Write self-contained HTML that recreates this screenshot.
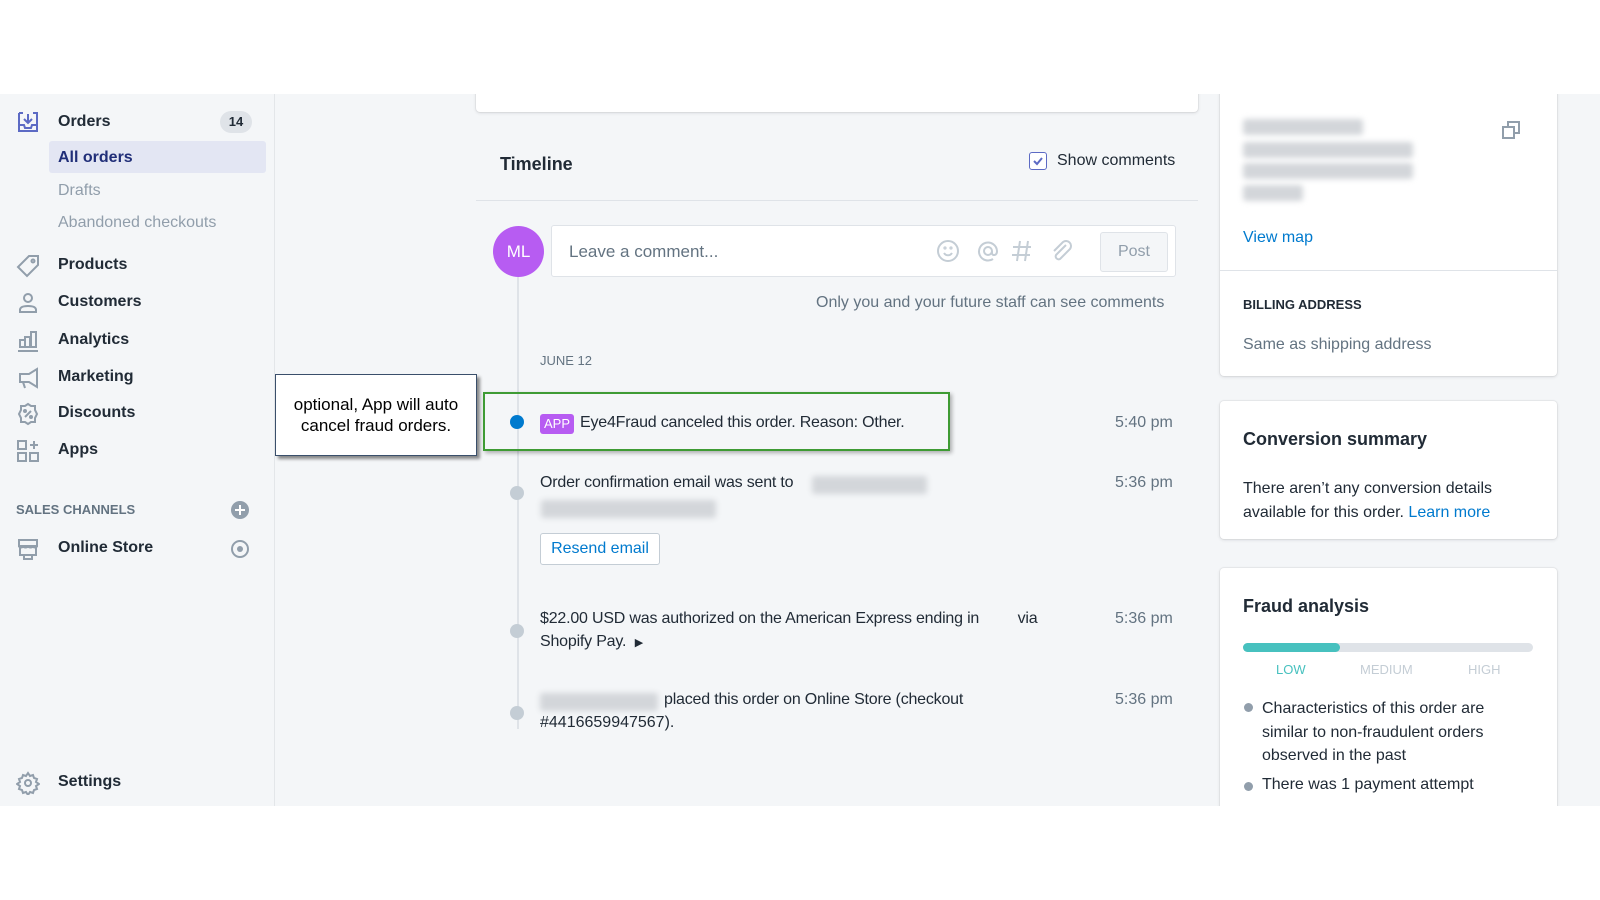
<!DOCTYPE html>
<html><head><meta charset="utf-8"><style>
*{box-sizing:border-box;margin:0;padding:0}
body{width:1600px;height:900px;background:#fff;font-family:"Liberation Sans",sans-serif;position:relative;overflow:hidden;color:#212b36}
#app{position:absolute;left:0;top:94px;width:1600px;height:712px;background:#f4f6f8;overflow:hidden}
#side{position:absolute;left:0;top:0;width:275px;height:712px;border-right:1px solid #e3e6e9;background:#f4f6f8}
.abs{position:absolute}
.nav{position:absolute;left:58px;font-size:16px;color:#212b36;font-weight:bold}
.sub{position:absolute;left:58px;font-size:16px;color:#919eab}
.ic{position:absolute;left:16px}
.card{position:absolute;background:#fff;border-radius:4px;box-shadow:0 0 0 1px rgba(63,63,68,.05),0 1px 3px rgba(63,63,68,.15)}
.t{position:absolute;font-size:16px;color:#212b36;white-space:nowrap}
.time{position:absolute;left:1115px;font-size:16px;color:#637381}
.dot{position:absolute;left:510px;width:14px;height:14px;border-radius:50%;background:#c4cdd5}
.blur{position:absolute;background:#d3d6da;filter:blur(3px);border-radius:3px}
</style></head><body>
<div id="app">
 <div id="side">
  <div class="abs" style="left:18px;top:-6px;width:20px;height:3px;background:#919eab"></div>
  <svg class="ic" style="top:16px" width="24" height="24" viewBox="0 0 24 24" fill="none" stroke="#5c6ac4" stroke-width="2"><path d="M3 3h4M17 3h4v18H3V3M3 15h5l1 3h6l1-3h5M12 4v8M8 9l4 4 4-4"/></svg>
  <div class="nav" style="top:19px">Orders</div>
  <div class="abs" style="left:220px;top:17px;width:32px;height:22px;border-radius:11px;background:#dfe3e8;font-size:13px;font-weight:bold;text-align:center;line-height:22px;color:#212b36">14</div>
  <div class="abs" style="left:49px;top:47px;width:217px;height:32px;background:#e3e6f3;border-radius:3px"></div>
  <div class="nav" style="top:55px;color:#202e78">All orders</div>
  <div class="sub" style="top:88px">Drafts</div>
  <div class="sub" style="top:120px">Abandoned checkouts</div>
  <svg class="ic" style="top:160px" width="24" height="24" viewBox="0 0 24 24" fill="none" stroke="#919eab" stroke-width="2"><path d="M13 2h9v9L11 22 2 13z"/><circle cx="17" cy="7" r="1.5"/></svg>
  <div class="nav" style="top:162px">Products</div>
  <svg class="ic" style="top:197px" width="24" height="24" viewBox="0 0 24 24" fill="none" stroke="#919eab" stroke-width="2"><circle cx="12" cy="7" r="4"/><path d="M4 21v-2c0-3 4-4 8-4s8 1 8 4v2z"/></svg>
  <div class="nav" style="top:199px">Customers</div>
  <svg class="ic" style="top:235px" width="24" height="24" viewBox="0 0 24 24" fill="none" stroke="#919eab" stroke-width="2"><path d="M2 22h20M3 18h18M4 18v-7h5v7M9 18V8h5v10M15 18V3h5v15"/></svg>
  <div class="nav" style="top:237px">Analytics</div>
  <svg class="ic" style="top:272px" width="24" height="24" viewBox="0 0 24 24" fill="none" stroke="#919eab" stroke-width="2"><path d="M21 3v18L13 16H4V8h9zM7 16l2 6"/></svg>
  <div class="nav" style="top:274px">Marketing</div>
  <svg class="ic" style="top:308px" width="24" height="24" viewBox="0 0 24 24" fill="none" stroke="#919eab" stroke-width="2"><path d="M12 2l3 2h4v4l2 4-2 4v4h-4l-3 2-3-2H5v-4l-2-4 2-4V4h4z"/><path d="M9 15l6-6"/><circle cx="9" cy="9" r="1"/><circle cx="15" cy="15" r="1"/></svg>
  <div class="nav" style="top:310px">Discounts</div>
  <svg class="ic" style="top:345px" width="24" height="24" viewBox="0 0 24 24" fill="none" stroke="#919eab" stroke-width="2"><rect x="2" y="2" width="8" height="8"/><rect x="2" y="14" width="8" height="8"/><rect x="14" y="14" width="8" height="8"/><path d="M18 2v8M14 6h8"/></svg>
  <div class="nav" style="top:347px">Apps</div>
  <div class="abs" style="left:16px;top:408px;font-size:13px;font-weight:bold;color:#637381">SALES CHANNELS</div>
  <svg class="abs" style="left:231px;top:407px" width="18" height="18" viewBox="0 0 18 18"><circle cx="9" cy="9" r="9" fill="#919eab"/><path d="M9 4v10M4 9h10" stroke="#fff" stroke-width="2"/></svg>
  <svg class="ic" style="top:443px" width="24" height="24" viewBox="0 0 24 24" fill="none" stroke="#919eab" stroke-width="2"><path d="M3 3h18v6H3zM3 9c0 2 4 2 4 0 0 2 5 2 5 0 0 2 5 2 5 0 0 2 4 2 4 0M4 11v7h16v-7M8 18v4h8v-4"/></svg>
  <div class="nav" style="top:445px">Online Store</div>
  <svg class="abs" style="left:231px;top:446px" width="18" height="18" viewBox="0 0 18 18"><circle cx="9" cy="9" r="8" fill="none" stroke="#919eab" stroke-width="2"/><circle cx="9" cy="9" r="3" fill="#919eab"/></svg>
  <svg class="ic" style="top:677px" width="24" height="24" viewBox="0 0 24 24" fill="none" stroke="#919eab" stroke-width="2"><circle cx="12" cy="12" r="3"/><path d="M12 2l2 3 3-1 1 3 3 1-1 3 3 2-3 2 1 3-3 1-1 3-3-1-2 3-2-3-3 1-1-3-3-1 1-3-3-2 3-2-1-3 3-1 1-3 3 1z"/></svg>
  <div class="nav" style="top:679px">Settings</div>
 </div>

 <div class="card" style="left:476px;top:-10px;width:722px;height:28px"></div>
 <div class="t" style="left:500px;top:60px;font-size:18px;font-weight:bold">Timeline</div>
 <div class="abs" style="left:1029px;top:58px;width:18px;height:18px;border:1px solid #5c6ac4;border-radius:3px;background:#fff"></div>
 <svg class="abs" style="left:1031px;top:60px" width="14" height="14" viewBox="0 0 14 14"><path d="M3 7l3 3 5-6" fill="none" stroke="#5c6ac4" stroke-width="2"/></svg>
 <div class="t" style="left:1057px;top:58px;color:#212b36">Show comments</div>
 <div class="abs" style="left:476px;top:106px;width:722px;height:1px;background:#dfe3e8"></div>
 <div class="abs" style="left:517px;top:160px;width:2px;height:475px;background:#dfe3e8"></div>
 <div class="abs" style="left:493px;top:132px;width:51px;height:51px;border-radius:50%;background:#b75cf2;color:#fff;font-size:17px;text-align:center;line-height:51px">ML</div>
 <div class="abs" style="left:551px;top:131px;width:625px;height:52px;background:#fff;border:1px solid #dfe3e8;border-radius:3px"></div>
 <div class="t" style="left:569px;top:148px;font-size:17px;color:#637381">Leave a comment...</div>
 <svg class="abs" style="left:936px;top:144px" width="140" height="26" viewBox="0 0 140 26" fill="none" stroke="#c4cdd5" stroke-width="2"><circle cx="12" cy="13" r="10"/><path d="M8 15c2 3 6 3 8 0"/><circle cx="9" cy="10" r=".6"/><circle cx="15" cy="10" r=".6"/><circle cx="52" cy="13" r="4"/><path d="M56 13v2c0 3 5 3 5-2a9 9 0 1 0-4 8"/><path d="M84 3l-3 20M92 3l-3 20M77 9h18M76 17h18"/><path d="M130 7l-10 10a3 3 0 0 0 4 4l10-10a5 5 0 0 0-7-7l-9 9"/></svg>
 <div class="abs" style="left:1100px;top:138px;width:68px;height:40px;border:1px solid #dfe3e8;border-radius:3px;background:#f4f6f8;color:#919eab;font-size:16px;text-align:center;line-height:38px">Post</div>
 <div class="t" style="left:816px;top:200px;color:#637381">Only you and your future staff can see comments</div>
 <div class="t" style="left:540px;top:259px;font-size:13px;color:#637381">JUNE 12</div>

 <div class="abs" style="left:275px;top:280px;width:202px;height:82px;background:#fff;border:1px solid #3a4f6b;box-shadow:3px 3px 3px rgba(0,0,0,.45);font-size:17px;color:#000;text-align:center;padding-top:19px;line-height:21px">optional, App will auto<br>cancel fraud orders.</div>
 <div class="abs" style="left:483px;top:298px;width:467px;height:59px;border:2px solid #3e9b34;box-shadow:2px 2px 4px rgba(0,0,0,.3)"></div>
 <div class="dot" style="top:321px;background:#007ace"></div>
 <div class="abs" style="left:540px;top:320px;width:34px;height:20px;border-radius:3px;background:#b75cf2;color:#fff;font-size:13px;text-align:center;line-height:20px">APP</div>
 <div class="t" style="left:580px;top:320px;letter-spacing:-0.2px">Eye4Fraud canceled this order. Reason: Other.</div>
 <div class="time" style="top:320px">5:40 pm</div>

 <div class="dot" style="top:392px"></div>
 <div class="t" style="left:540px;top:380px;letter-spacing:-0.2px">Order confirmation email was sent to</div>
 <div class="blur" style="left:812px;top:382px;width:115px;height:18px"></div>
 <div class="blur" style="left:541px;top:406px;width:175px;height:18px"></div>
 <div class="time" style="top:380px">5:36 pm</div>
 <div class="abs" style="left:540px;top:439px;width:120px;height:32px;background:#fff;border:1px solid #c4cdd5;border-radius:3px;color:#007ace;font-size:16px;text-align:center;line-height:30px">Resend email</div>

 <div class="dot" style="top:530px"></div>
 <div class="t" style="left:540px;top:516px;letter-spacing:-0.2px">$22.00 USD was authorized on the American Express ending in <span style="display:inline-block;width:30px"></span> via</div>
 <div class="t" style="left:540px;top:539px;letter-spacing:-0.2px">Shopify Pay. &nbsp;<span style="font-size:11px">▶</span></div>
 <div class="time" style="top:516px">5:36 pm</div>

 <div class="dot" style="top:612px"></div>
 <div class="blur" style="left:540px;top:599px;width:118px;height:18px"></div>
 <div class="t" style="left:664px;top:597px;letter-spacing:-0.2px">placed this order on Online Store (checkout</div>
 <div class="t" style="left:540px;top:620px">#4416659947567).</div>
 <div class="time" style="top:597px">5:36 pm</div>

 <div class="card" style="left:1220px;top:-10px;width:337px;height:292px"></div>
 <div class="blur" style="left:1243px;top:25px;width:120px;height:16px"></div>
 <div class="blur" style="left:1243px;top:48px;width:170px;height:16px"></div>
 <div class="blur" style="left:1243px;top:69px;width:170px;height:16px"></div>
 <div class="blur" style="left:1243px;top:91px;width:60px;height:16px"></div>
 <svg class="abs" style="left:1501px;top:26px" width="20" height="20" viewBox="0 0 20 20" fill="none" stroke="#919eab" stroke-width="2"><rect x="2" y="7" width="11" height="11"/><path d="M7 7V2h11v11h-5"/></svg>
 <div class="t" style="left:1243px;top:135px;color:#007ace">View map</div>
 <div class="abs" style="left:1220px;top:176px;width:337px;height:1px;background:#dfe3e8"></div>
 <div class="t" style="left:1243px;top:203px;font-size:13px;font-weight:bold">BILLING ADDRESS</div>
 <div class="t" style="left:1243px;top:242px;color:#637381">Same as shipping address</div>

 <div class="card" style="left:1220px;top:307px;width:337px;height:138px"></div>
 <div class="t" style="left:1243px;top:335px;font-size:18px;font-weight:bold">Conversion summary</div>
 <div class="t" style="left:1243px;top:386px;color:#212b36">There aren’t any conversion details</div>
 <div class="t" style="left:1243px;top:410px">available for this order. <span style="color:#007ace">Learn more</span></div>

 <div class="card" style="left:1220px;top:474px;width:337px;height:280px"></div>
 <div class="t" style="left:1243px;top:502px;font-size:18px;font-weight:bold">Fraud analysis</div>
 <div class="abs" style="left:1243px;top:549px;width:290px;height:9px;border-radius:5px;background:#dfe3e8"></div>
 <div class="abs" style="left:1243px;top:549px;width:97px;height:9px;border-radius:5px;background:#47c1bf"></div>
 <div class="t" style="left:1276px;top:568px;font-size:13px;color:#47c1bf">LOW</div>
 <div class="t" style="left:1360px;top:568px;font-size:13px;color:#c4cdd5">MEDIUM</div>
 <div class="t" style="left:1468px;top:568px;font-size:13px;color:#c4cdd5">HIGH</div>
 <div class="abs" style="left:1244px;top:609px;width:9px;height:9px;border-radius:50%;background:#919eab"></div>
 <div class="t" style="left:1262px;top:603px;line-height:23.5px">Characteristics of this order are<br>similar to non-fraudulent orders<br>observed in the past</div>
 <div class="abs" style="left:1244px;top:688px;width:9px;height:9px;border-radius:50%;background:#919eab"></div>
 <div class="t" style="left:1262px;top:682px">There was 1 payment attempt</div>
</div>
</body></html>
